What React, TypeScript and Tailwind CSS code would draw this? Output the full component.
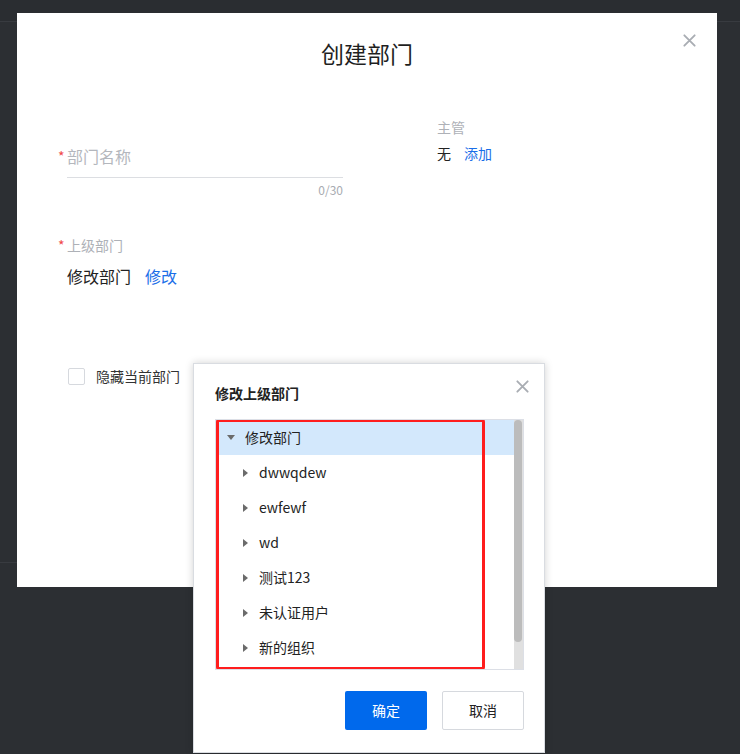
import React from 'react';

const treeItems = ['dwwqdew', 'ewfewf', 'wd', '测试123', '未认证用户', '新的组织'];

const CloseIcon = ({ className }: { className?: string }) => (
  <svg viewBox="0 0 16 16" className={className} fill="none" stroke="currentColor" strokeWidth="2" strokeLinecap="round">
    <path d="M2.5 2.5l11 11M13.5 2.5l-11 11" />
  </svg>
);

const CaretRight = () => (
  <span className="w-0 h-0 border-y-[4px] border-y-transparent border-l-[5px] border-l-[#6b6b6b]" />
);

const CaretDown = () => (
  <span className="w-0 h-0 border-x-[4px] border-x-transparent border-t-[5px] border-t-[#6b6b6b]" />
);

const App: React.FC = () => {
  return (
    <div
      className="relative w-[740px] h-[754px] bg-[#2c2f33] overflow-hidden text-[#222]"
      style={{ fontFamily: '"Noto Sans CJK SC", "Liberation Sans", sans-serif' }}
    >
      {/* page behind the mask */}
      <div className="h-[22px] border-b border-[#383b40] bg-[#2a2d31]" />

      {/* main dialog */}
      <div className="absolute left-[17px] top-[13px] w-[700px] h-[574px] bg-white">
        <button className="absolute right-[20px] top-[20px] text-[#a9adb3]">
          <CloseIcon className="w-[15px] h-[15px]" />
        </button>
        <h2 className="pt-[24px] h-[56px] text-center text-[23px] leading-[32px] font-normal text-[#1f1f1f]">创建部门</h2>

        <div className="mt-[48px] flex">
          {/* left column */}
          <div className="ml-[41px] w-[285px]">
            <div className="pt-[29px] flex">
              <span className="w-[9px] text-[#f04848] text-[14px] leading-[20px]">*</span>
              <div className="w-[276px]">
                <div className="pb-[11px] border-b border-[#dcdee2] text-[16px] leading-[20px] text-[#b4b7bd]">部门名称</div>
                <div className="mt-[4px] text-right text-[12px] leading-[16px] text-[#a8abb1]">0/30</div>
              </div>
            </div>

            <div className="mt-[37px] flex">
              <span className="w-[9px] text-[#f04848] text-[14px] leading-[20px]">*</span>
              <span className="text-[14px] leading-[20px] text-[#aeb1b7]">上级部门</span>
            </div>
            <div className="mt-[10px] ml-[9px] flex gap-[14px] text-[16px] leading-[22px]">
              <span>修改部门</span>
              <span className="text-[#1a6ee8]">修改</span>
            </div>

            <div className="mt-[79px] ml-[10px] flex items-center gap-[11px]">
              <span className="w-[17px] h-[17px] rounded-[2px] border border-[#d6d9de] bg-white" />
              <span className="text-[14px] leading-[20px] text-[#333]">隐藏当前部门</span>
            </div>
          </div>

          {/* right column */}
          <div className="ml-[94px]">
            <div className="text-[14px] leading-[20px] text-[#aeb1b7]">主管</div>
            <div className="mt-[6px] flex gap-[13px] text-[14px] leading-[20px]">
              <span>无</span>
              <span className="text-[#1a6ee8]">添加</span>
            </div>
          </div>
        </div>
      </div>

      <div className="absolute left-0 top-[562px] w-[17px] border-t border-[#383b40]" />

      {/* sub dialog */}
      <div className="absolute left-[193px] top-[363px] w-[352px] h-[390px] bg-white border border-[#d9dce1] shadow-[0_0_8px_rgba(0,0,0,0.18)]">
        <button className="absolute right-[14px] top-[15px] text-[#a9adb3]">
          <CloseIcon className="w-[15px] h-[15px]" />
        </button>
        <div className="pt-[19px] pl-[21px] text-[14px] leading-[20px] font-bold text-[#222]">修改上级部门</div>

        <div className="relative mt-[16px] ml-[21px] w-[309px] h-[251px] border border-[#dcdfe6] flex overflow-hidden">
          <div className="flex-1">
            <div className="h-[35px] bg-[#d3e8fc] flex items-center pl-[11px] gap-[10px] text-[14px]">
              <CaretDown />
              <span>修改部门</span>
            </div>
            {treeItems.map((item) => (
              <div key={item} className="h-[35px] flex items-center pl-[27px] gap-[11px] text-[14px]">
                <CaretRight />
                <span>{item}</span>
              </div>
            ))}
          </div>
          <div className="w-[9px] bg-[#e0e0e0] flex flex-col">
            <div className="w-[8px] h-[222px] rounded-[4px] bg-[#bcbcbc]" />
          </div>

          {/* annotation */}
          <div className="absolute left-0 top-[-1px] w-[269px] h-[251px] border-[3px] border-[#ff1d1d] rounded-[3px]" />
        </div>

        <div className="mt-[21px] pr-[20px] flex justify-end gap-[15px]">
          <button className="w-[82px] h-[39px] rounded-[2px] bg-[#0069ec] text-white text-[14px]">确定</button>
          <button className="w-[82px] h-[39px] rounded-[2px] border border-[#d6d9de] bg-white text-[#222] text-[14px]">取消</button>
        </div>
      </div>
    </div>
  );
};

export default App;
